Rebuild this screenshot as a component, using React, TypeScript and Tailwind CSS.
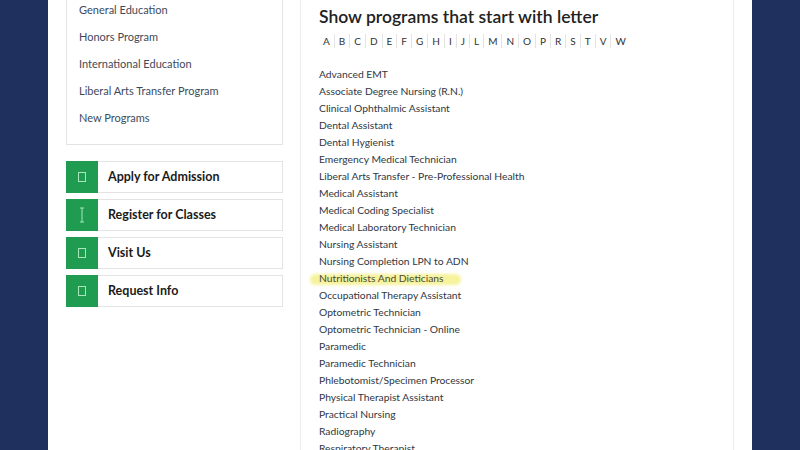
import React from "react";

const leftLinks = [
  "General Education",
  "Honors Program",
  "International Education",
  "Liberal Arts Transfer Program",
  "New Programs",
];

const buttons = [
  { label: "Apply for Admission", icon: "box" },
  { label: "Register for Classes", icon: "beam" },
  { label: "Visit Us", icon: "box" },
  { label: "Request Info", icon: "box" },
];

const letters = "A B C D E F G H I J L M N O P R S T V W".split(" ");

const programs = [
  "Advanced EMT",
  "Associate Degree Nursing (R.N.)",
  "Clinical Ophthalmic Assistant",
  "Dental Assistant",
  "Dental Hygienist",
  "Emergency Medical Technician",
  "Liberal Arts Transfer - Pre-Professional Health",
  "Medical Assistant",
  "Medical Coding Specialist",
  "Medical Laboratory Technician",
  "Nursing Assistant",
  "Nursing Completion LPN to ADN",
  "Nutritionists And Dieticians",
  "Occupational Therapy Assistant",
  "Optometric Technician",
  "Optometric Technician - Online",
  "Paramedic",
  "Paramedic Technician",
  "Phlebotomist/Specimen Processor",
  "Physical Therapist Assistant",
  "Practical Nursing",
  "Radiography",
  "Respiratory Therapist",
];

function Icon({ kind }: { kind: string }) {
  if (kind === "beam") {
    return (
      <svg width="8" height="16" viewBox="0 0 8 16">
        <path d="M2 1h4M4 1v14M2 15h4" stroke="#a8e6bd" strokeWidth="1" fill="none" />
      </svg>
    );
  }
  return <div className="w-[8px] h-[10px] border border-[#a8e6bd]" />;
}

export default function App() {
  return (
    <div
      className="w-[800px] h-[450px] overflow-hidden flex bg-[#1f305e]"
      style={{ fontFamily: "Lato, 'Open Sans', sans-serif" }}
    >
      <div className="w-[48px] shrink-0" />
      <div className="flex-1 bg-white flex pl-[18px] pr-[18px] gap-[17px] overflow-hidden">
        <div className="w-[217px] shrink-0 flex flex-col">
          <div className="-mt-[20px] border border-[#e3e3e3] pl-[12px] pt-[16px] pb-[12px] flex flex-col">
            {leftLinks.map((l) => (
              <div key={l} className="h-[27px] flex items-center text-[11px] text-[#3e4a5a]">
                {l}
              </div>
            ))}
          </div>
          <div className="mt-[16px] flex flex-col gap-[6px]">
            {buttons.map((b) => (
              <div key={b.label} className="h-[32px] flex border border-[#e3e3e3]">
                <div className="w-[32px] -ml-px -my-px h-[32px] bg-[#1f9c4f] flex items-center justify-center shrink-0">
                  <Icon kind={b.icon} />
                </div>
                <div className="flex items-center pl-[10px] text-[12.5px] font-bold text-[#1b1b1b]">
                  {b.label}
                </div>
              </div>
            ))}
          </div>
        </div>
        <div className="flex-1 border-x border-[#ececec] pl-[18px] pt-[5px] overflow-hidden">
          <div className="text-[17.5px] leading-[24px] font-semibold text-[#222]">
            Show programs that start with letter
          </div>
          <div className="flex mt-[5px] text-[10px] text-[#333] leading-[14px]">
            {letters.map((l, i) => (
              <div
                key={l}
                className={
                  i === 0
                    ? "px-[4px]"
                    : "px-[4px] border-l border-[#e4e4e4]"
                }
              >
                {l}
              </div>
            ))}
          </div>
          <div className="mt-[18px] flex flex-col">
            {programs.map((p) => (
              <div key={p} className="h-[17px] flex items-center text-[10.3px] text-[#2f3744]">
                {p === "Nutritionists And Dieticians" ? (
                  <span className="relative">
                    <span className="absolute -left-[9px] -right-[18px] top-[3px] bottom-[1px] bg-[#f6f39c] rounded-full blur-[1.5px]" />
                    <span className="relative text-[#4b4a3a]">{p}</span>
                  </span>
                ) : (
                  p
                )}
              </div>
            ))}
          </div>
        </div>
      </div>
      <div className="w-[48px] shrink-0" />
    </div>
  );
}
